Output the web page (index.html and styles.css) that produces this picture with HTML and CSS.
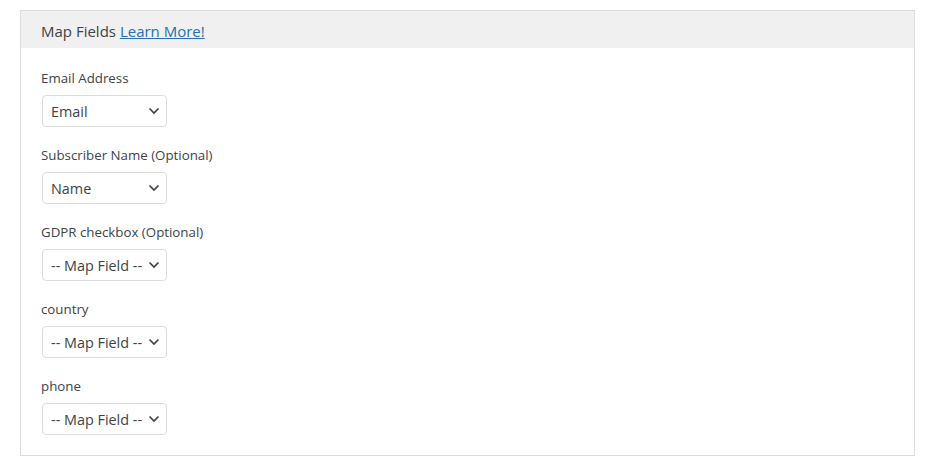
FILE: index.html
```html
<!DOCTYPE html>
<html lang="en">
<head>
  <meta charset="UTF-8" />
  <title>Map Fields</title>
  <link rel="stylesheet" href="styles.css">
</head>
<body>
  <div class="panel">
    <div class="panel-head">Map Fields <a href="#">Learn More!</a></div>
    <div class="panel-body">
      <div class="field">
        <label>Email Address</label>
        <span class="select-wrap">
          <select><option>Email</option></select>
          <svg class="chev" width="12" height="8" viewBox="0 0 12 8"><path d="M1.5 1.5 L6 6 L10.5 1.5" fill="none" stroke="#3c434a" stroke-width="1.7"/></svg>
        </span>
      </div>
      <div class="field">
        <label>Subscriber Name (Optional)</label>
        <span class="select-wrap">
          <select><option>Name</option></select>
          <svg class="chev" width="12" height="8" viewBox="0 0 12 8"><path d="M1.5 1.5 L6 6 L10.5 1.5" fill="none" stroke="#3c434a" stroke-width="1.7"/></svg>
        </span>
      </div>
      <div class="field">
        <label>GDPR checkbox (Optional)</label>
        <span class="select-wrap">
          <select><option>-- Map Field --</option></select>
          <svg class="chev" width="12" height="8" viewBox="0 0 12 8"><path d="M1.5 1.5 L6 6 L10.5 1.5" fill="none" stroke="#3c434a" stroke-width="1.7"/></svg>
        </span>
      </div>
      <div class="field">
        <label>country</label>
        <span class="select-wrap">
          <select><option>-- Map Field --</option></select>
          <svg class="chev" width="12" height="8" viewBox="0 0 12 8"><path d="M1.5 1.5 L6 6 L10.5 1.5" fill="none" stroke="#3c434a" stroke-width="1.7"/></svg>
        </span>
      </div>
      <div class="field">
        <label>phone</label>
        <span class="select-wrap">
          <select><option>-- Map Field --</option></select>
          <svg class="chev" width="12" height="8" viewBox="0 0 12 8"><path d="M1.5 1.5 L6 6 L10.5 1.5" fill="none" stroke="#3c434a" stroke-width="1.7"/></svg>
        </span>
      </div>
    </div>
  </div>
</body>
</html>
```

FILE: styles.css
```css
* {
  box-sizing: border-box;
}

body {
  margin: 0;
  padding: 10px 20px;
  background: #fff;
  color: #3c434a;
  font-family: 'Open Sans', 'Noto Sans', sans-serif;
  font-size: 13.3px;
}

.panel {
  border: 1px solid #dcdcde;
  background: #fff;
}

.panel-head {
  background: #f0f0f0;
  height: 37px;
  line-height: 34px;
  padding: 3px 20px 0;
  font-size: 15px;
}

.panel-head a {
  color: #2271b1;
  text-decoration: underline;
}

.panel-body {
  padding: 20px 20px 20px;
}

.field {
  display: flex;
  flex-direction: column;
  align-items: flex-start;
  gap: 7px;
  margin-bottom: 18px;
}

.field:last-child {
  margin-bottom: 0;
}

.field label {
  line-height: 20px;
}

.select-wrap {
  position: relative;
  display: inline-block;
  margin-left: 1px;
}

select {
  appearance: none;
  -webkit-appearance: none;
  width: 125px;
  height: 32px;
  padding: 0 24px 0 8px;
  border: 1px solid #dcdcde;
  border-radius: 4px;
  background: #fff;
  color: #3c434a;
  font-family: inherit;
  font-size: 14.4px;
}

.chev {
  position: absolute;
  right: 7px;
  top: 12px;
  pointer-events: none;
}
```
